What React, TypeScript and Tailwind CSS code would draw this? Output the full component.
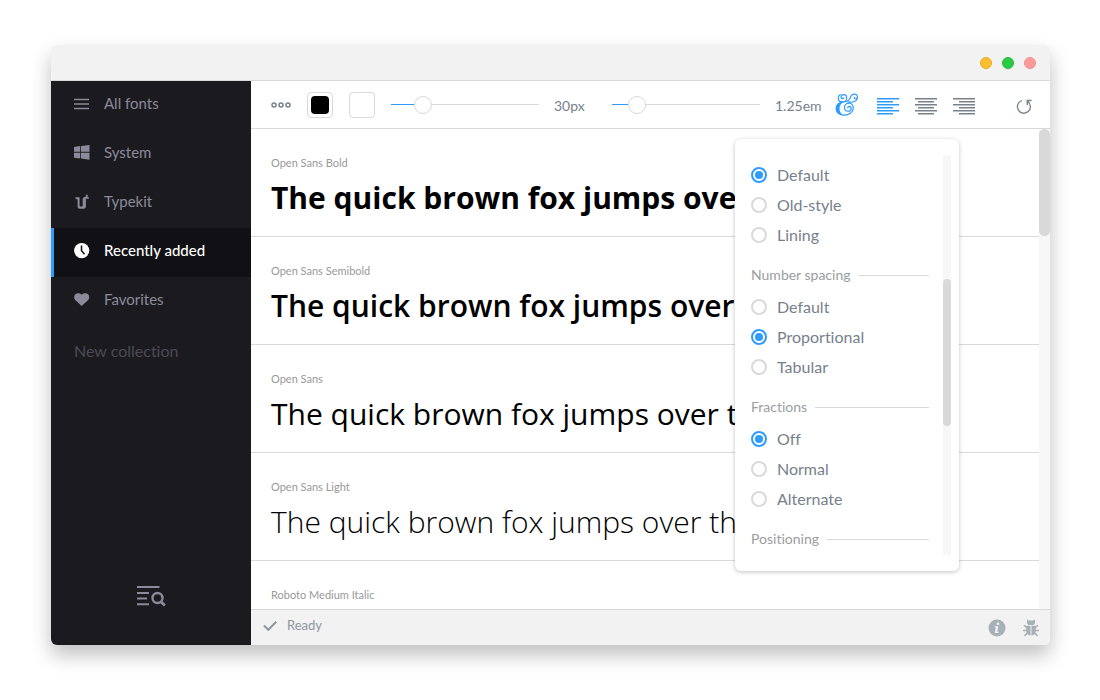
import { useState } from 'react'
import type { ReactNode } from 'react'

const SAMPLE_TEXT = 'The quick brown fox jumps over the lazy dog'

const FONTS = [
  { name: 'Open Sans Bold', className: "font-['Open_Sans',sans-serif] font-bold" },
  { name: 'Open Sans Semibold', className: "font-['Open_Sans',sans-serif] font-semibold" },
  { name: 'Open Sans', className: "font-['Open_Sans',sans-serif] font-normal" },
  { name: 'Open Sans Light', className: "font-['Open_Sans',sans-serif] font-light" },
  { name: 'Roboto Medium Italic', className: 'font-[Roboto,sans-serif] font-medium italic' },
]

const FEATURES = [
  { id: 'figures', title: '', options: ['Default', 'Old-style', 'Lining'] },
  { id: 'spacing', title: 'Number spacing', options: ['Default', 'Proportional', 'Tabular'] },
  { id: 'fractions', title: 'Fractions', options: ['Off', 'Normal', 'Alternate'] },
  { id: 'positioning', title: 'Positioning', options: [] },
]

const COLLECTIONS: { name: string; icon: ReactNode }[] = [
  { name: 'All fonts', icon: <ListIcon /> },
  { name: 'System', icon: <WindowsIcon /> },
  { name: 'Typekit', icon: <TypekitIcon /> },
  { name: 'Recently added', icon: <ClockIcon /> },
  { name: 'Favorites', icon: <HeartIcon /> },
]

function ListIcon() {
  return (
    <svg viewBox="0 0 16 16" className="size-4" fill="currentColor" aria-hidden>
      <path d="M0 2.800h15v1.400H0zM0 7.300h15v1.400H0zM0 11.800h15v1.400H0z" />
    </svg>
  )
}

function WindowsIcon() {
  return (
    <svg viewBox="0 0 16 16" className="size-4" fill="currentColor" aria-hidden>
      <path d="M0 1.9 6.2 1v5.8H0zM7 .9 15.5 0v6.8H7zM0 7.7h6.2v5.8L0 12.7zM7 7.7h8.5v7L7 13.6z" />
    </svg>
  )
}

function TypekitIcon() {
  return (
    <svg viewBox="0 0 16 16" className="size-4" fill="currentColor" aria-hidden>
      <path d="M1.500 3.200h4.100v8.300c0 .6.300.9.900.9h1.300c.6 0 .9-.3.900-.9V5.600c0-1.600.6-2.400 2.100-2.600.9-.1 1.200-.6 1.200-2.300h1.700v2.600h1.200v1.500h-3v7.500c0 1.700-.8 2.500-2.500 2.500H6c-1.600 0-2.400-.8-2.400-2.500V6.200c0-.9-.5-1.300-2.100-1.500z" />
    </svg>
  )
}

function ClockIcon() {
  return (
    <svg viewBox="0 0 16 16" className="size-4" aria-hidden>
      <circle cx="7.7" cy="7.6" r="7.6" fill="currentColor" />
      <path d="M7.5 2.6v5.2l3 3.4" fill="none" stroke="#111014" strokeWidth="1.5" />
    </svg>
  )
}

function HeartIcon() {
  return (
    <svg viewBox="0 0 16 16" className="size-4" fill="currentColor" aria-hidden>
      <path d="M7.700 14 1.200 8C-.4 6.300 0 3.400 1.500 2.100 3.200.700 6 .800 7.700 2.700 9.400.800 12.200.700 13.900 2.100c1.500 1.300 1.900 4.200.3 5.900z" />
    </svg>
  )
}

function SearchListIcon() {
  return (
    <svg viewBox="0 0 30 22" className="h-[22px] w-[30px]" fill="none" stroke="currentColor" strokeWidth="2" aria-hidden>
      <path d="M1 2h22.500M1 8h12M1 13.500h10M1 19.200h12" />
      <circle cx="21.500" cy="13" r="5" strokeWidth="2.400" />
      <path d="m25 16.800 3.800 3.700" strokeWidth="2.800" />
    </svg>
  )
}

function SwashIcon() {
  return (
    <svg viewBox="0 0 24 24" className="size-6" aria-hidden>
      <path
        d="M7 8.600C3 9.300.600 12 .600 15.600c0 4.300 3.400 7.100 8 7.100v-1C5.800 21.200 4.500 18.700 4.500 15.500c0-3 1.300-5.300 4.200-6.300z"
        fill="currentColor"
      />
      <g fill="none" stroke="currentColor" strokeLinecap="round" strokeWidth="1.200">
        <path d="M8.500 22.200c5.500.2 9.800-2.800 9.800-7.100 0-3-2-4.900-4.400-4.900-2.700 0-4.400 2-4.400 4.200 0 2.400 1.800 3.800 3.700 3.800 1.900 0 3-1.300 3-2.800 0-1.400-1-2.100-2-2.100-.9 0-1.500.7-1.300 1.500" />
        <path d="M8.800 4.800c-.4 1.200-2.400 1.100-2.700-.3C5.800 2.900 7 1.700 8.600 1.700c2 0 3.100 1.500 3.100 3.200 0 2.600-2.300 4-4.500 4-2.400 0-3.900-1.600-3.900-3.700 0-1.500.8-2.800 2-3.600" />
        <path d="M7 9c3.700 0 6.200-.6 7.500-2.700 1-1.800 1.500-5.100 4.700-5.100 2.200 0 3.300 1.400 3.300 2.900 0 1.300-1 2-1.900 1.900-.9 0-1.400-.8-1.100-1.600" />
        <path d="M13 8.900c4.500.9 9-.3 9.500-4.700" />
      </g>
    </svg>
  )
}

function AlignLeftIcon() {
  return (
    <svg viewBox="0 0 22 17" className="h-[17px] w-[22px]" fill="currentColor" aria-hidden>
      <path d="M0 0h22v1.400H0zM0 3h16v1.400H0zM0 6h22v1.400H0zM0 9h16v1.400H0zM0 12h22v1.400H0zM0 15h16v1.400H0z" />
    </svg>
  )
}

function AlignCenterIcon() {
  return (
    <svg viewBox="0 0 22 17" className="h-[17px] w-[22px]" fill="currentColor" aria-hidden>
      <path d="M0 0h22v1.400H0zM3 3h16v1.400H3zM0 6h22v1.400H0zM3 9h16v1.400H3zM0 12h22v1.400H0zM3 15h16v1.400H3z" />
    </svg>
  )
}

function AlignRightIcon() {
  return (
    <svg viewBox="0 0 22 17" className="h-[17px] w-[22px]" fill="currentColor" aria-hidden>
      <path d="M0 0h22v1.400H0zM6 3h16v1.400H6zM0 6h22v1.400H0zM6 9h16v1.400H6zM0 12h22v1.400H0zM6 15h16v1.400H6z" />
    </svg>
  )
}

function ResetIcon() {
  return (
    <svg viewBox="0 0 16 16" className="size-4" fill="none" stroke="currentColor" strokeWidth="1.300" aria-hidden>
      <path d="M6 1.500A6.500 6.500 0 1 0 11.800 2.500M15.500 1.500h-4.300v4.700" />
    </svg>
  )
}

function CheckIcon() {
  return (
    <svg viewBox="0 0 14 12" className="h-3 w-3.5" fill="none" stroke="currentColor" strokeWidth="2" aria-hidden>
      <path d="m1 5.500 4.300 4.300L13.200 1.800" />
    </svg>
  )
}

function InfoIcon() {
  return (
    <svg viewBox="0 0 18 18" className="size-[18px]" aria-hidden>
      <circle cx="9" cy="9" r="8.500" fill="currentColor" />
      <circle cx="10" cy="4.700" r="1.300" fill="#f2f2f2" />
      <path d="M6.800 7.200h3.700l-1.300 5.600h1.500l-.3 1.200H6.700l1.200-5.500H6.500z" fill="#f2f2f2" />
    </svg>
  )
}

function BugIcon() {
  return (
    <svg viewBox="0 0 18 18" className="size-[18px]" fill="currentColor" aria-hidden>
      <path d="M5 .5 6.600 1.500h4.800L13 .5v3.800L11.500 6h-5L5 4.300z" />
      <path d="M4.500 6.800h4v9.700C5.500 16.200 4.200 14 4.200 11zM9.500 6.800h4l.3 4.200c0 3-1.300 5.200-4.300 5.500z" />
      <path d="M5 8.500 2 6.300M5 11.500H1M5.500 14l-3 2.800M13 8.500l3-2.200M13 11.500h4M12.500 14l3 2.800" stroke="currentColor" strokeWidth="1.600" fill="none" />
    </svg>
  )
}

interface SliderProps {
  label: string
  min: number
  max: number
  step: number
  value: number
  onChange: (value: number) => void
}

function Slider({ label, min, max, step, value, onChange }: SliderProps) {
  const filled = ((value - min) / (max - min)) * 100

  return (
    <input
      type="range"
      aria-label={label}
      min={min}
      max={max}
      step={step}
      value={value}
      onChange={(event) => onChange(Number(event.target.value))}
      className="ml-4 h-[18px] w-[148px] appearance-none bg-size-[100%_1px] bg-center bg-no-repeat [&::-webkit-slider-thumb]:size-[18px] [&::-webkit-slider-thumb]:appearance-none [&::-webkit-slider-thumb]:rounded-full [&::-webkit-slider-thumb]:border [&::-webkit-slider-thumb]:border-[#d9d9d9] [&::-webkit-slider-thumb]:bg-white"
      style={{
        backgroundImage: `linear-gradient(to right, #2e9bff ${filled}%, #d9d9d9 ${filled}%)`,
      }}
    />
  )
}

function Sidebar() {
  const [active, setActive] = useState('Recently added')

  return (
    <aside className="flex w-[200px] shrink-0 flex-col bg-[#1b1a1f] text-[#8b8a9a]">
      <nav>
        {COLLECTIONS.map((item) => (
          <button
            key={item.name}
            type="button"
            onClick={() => setActive(item.name)}
            className={
              item.name === active
                ? 'flex h-[49px] w-full items-center gap-3.5 border-l-3 border-[#2e9bff] bg-[#111014] pb-1 pl-5 text-[15px] font-medium text-white'
                : 'flex h-[49px] w-full items-center gap-3.5 border-l-3 border-transparent pb-1 pl-5 text-[15px]'
            }
          >
            {item.icon}
            {item.name}
          </button>
        ))}
      </nav>
      <input
        aria-label="New collection"
        placeholder="New collection"
        className="mx-[23px] mt-2.5 h-7 bg-transparent text-base outline-none placeholder:text-[#4b4a56]"
      />
      <button type="button" aria-label="Search fonts" className="mt-auto mb-[38px] self-center">
        <SearchListIcon />
      </button>
    </aside>
  )
}

function Toolbar() {
  const [fontSize, setFontSize] = useState(30)
  const [lineHeight, setLineHeight] = useState(1.25)

  return (
    <div className="flex h-12 shrink-0 items-center border-b border-[#d9d9d9] pr-[18px] pl-5 text-sm text-[#76818c]">
      <button type="button" aria-label="More options" className="w-5">
        <svg viewBox="0 0 20 6" className="h-1.5 w-5" fill="none" stroke="currentColor" strokeWidth="1.500" aria-hidden>
          <circle cx="3" cy="3" r="2" />
          <circle cx="10" cy="3" r="2" />
          <circle cx="17" cy="3" r="2" />
        </svg>
      </button>
      <button
        type="button"
        aria-label="Text color"
        className="ml-4 size-[26px] rounded border border-[#d9d9d9] p-[3px]"
      >
        <span className="block size-full rounded-sm bg-black" />
      </button>
      <button
        type="button"
        aria-label="Background color"
        className="ml-4 size-[26px] rounded border border-[#d9d9d9] bg-white"
      />
      <Slider label="Font size" min={8} max={132} step={1} value={fontSize} onChange={setFontSize} />
      <output className="ml-[15px] w-[42px] pt-0.5">{fontSize}px</output>
      <Slider label="Line height" min={1} max={3} step={0.05} value={lineHeight} onChange={setLineHeight} />
      <output className="ml-[15px] w-12 pt-0.5">{lineHeight}em</output>
      <button type="button" aria-label="OpenType features" className="ml-3 text-[#2e9bff]">
        <SwashIcon />
      </button>
      <div className="mt-1 ml-[18px] flex gap-4">
        <button type="button" aria-label="Align left" className="text-[#2e9bff]">
          <AlignLeftIcon />
        </button>
        <button type="button" aria-label="Align center">
          <AlignCenterIcon />
        </button>
        <button type="button" aria-label="Align right">
          <AlignRightIcon />
        </button>
      </div>
      <button type="button" aria-label="Reset" className="mt-1 ml-auto">
        <ResetIcon />
      </button>
    </div>
  )
}

function FeaturesPopup() {
  const [selected, setSelected] = useState<Record<string, string>>({
    figures: 'Default',
    spacing: 'Proportional',
    fractions: 'Off',
  })

  return (
    <div className="absolute top-2.5 right-[91px] flex h-[432px] w-56 gap-3.5 rounded-md bg-white py-4 pr-2 pl-4 shadow-[0_1px_4px_rgba(0,0,0,0.25)]">
      <div className="flex-1 overflow-hidden pt-[5px]">
        {FEATURES.map((feature) => (
          <section key={feature.id} aria-label={feature.title || 'Number style'}>
            {feature.title ? (
              <h3 className="mt-4 mb-2 flex items-center gap-2 text-sm leading-[18px] text-[#9a9da1]">
                {feature.title}
                <span className="h-px flex-1 bg-[#d9d9d9]" />
              </h3>
            ) : null}
            {feature.options.map((option) => (
              <label key={option} className="flex h-[30px] items-center gap-2.5 text-base text-[#76818c]">
                <input
                  type="radio"
                  name={feature.id}
                  checked={selected[feature.id] === option}
                  onChange={() => setSelected((prev) => ({ ...prev, [feature.id]: option }))}
                  className="size-4 appearance-none rounded-full border-2 border-[#d9d9d9] bg-white checked:border-[#2e9bff] checked:bg-[#2e9bff] checked:bg-clip-content checked:p-0.5"
                />
                {option}
              </label>
            ))}
          </section>
        ))}
      </div>
      <div className="w-2 bg-[#f7f7f7] pt-[124px]">
        <div className="h-[147px] rounded bg-[#d9d9d9]" />
      </div>
    </div>
  )
}

function FontList() {
  return (
    <div className="relative flex min-h-0 flex-1">
      <ul className="min-w-0 flex-1 overflow-hidden">
        {FONTS.map((font) => (
          <li key={font.name} className="h-[108px] border-b border-[#d9d9d9] px-5 pt-[26px]">
            <p className="text-[11px] leading-4 text-[#999999]">{font.name}</p>
            <p className={`${font.className} mt-2 text-[30px] leading-[38px] whitespace-nowrap text-black`}>
              {SAMPLE_TEXT}
            </p>
          </li>
        ))}
      </ul>
      <div className="w-[11px] bg-[#f7f7f7]">
        <div className="h-[107px] rounded-md bg-[#d9d9d9]" />
      </div>
      <FeaturesPopup />
    </div>
  )
}

export default function App() {
  return (
    <div className="flex h-screen bg-white pt-[45px] pr-[50px] pb-[55px] pl-[51px] font-[Lato,sans-serif] [font-variant-ligatures:none]">
      <div className="flex flex-1 flex-col rounded-md shadow-[0_10px_20px_rgba(0,0,0,0.25)]">
        <header className="flex h-9 shrink-0 items-center justify-end gap-2.5 rounded-t-md border-b border-[#d9d9d9] bg-[#f2f2f2] pr-3.5">
          <button type="button" aria-label="Minimize" className="size-3 rounded-full border border-[#e5ab2c] bg-[#fdbf2d]" />
          <button type="button" aria-label="Maximize" className="size-3 rounded-full border border-[#27b83c] bg-[#2acb42]" />
          <button type="button" aria-label="Close" className="size-3 rounded-full border border-[#ef9090] bg-[#fc9b98]" />
        </header>
        <div className="flex min-h-0 flex-1 overflow-hidden rounded-b-md">
          <Sidebar />
          <main className="flex min-w-0 flex-1 flex-col bg-white">
            <Toolbar />
            <FontList />
            <footer className="flex h-9 shrink-0 items-center border-t border-[#d9d9d9] bg-[#f2f2f2] pr-2.5 pl-3 text-[13px] text-[#8c979f]">
              <div className="flex items-center gap-2.5 pb-1">
                <CheckIcon />
                <span>Ready</span>
              </div>
              <div className="ml-auto flex gap-4 text-[#a6b0b7]">
                <button type="button" aria-label="About">
                  <InfoIcon />
                </button>
                <button type="button" aria-label="Report a bug">
                  <BugIcon />
                </button>
              </div>
            </footer>
          </main>
        </div>
      </div>
    </div>
  )
}
